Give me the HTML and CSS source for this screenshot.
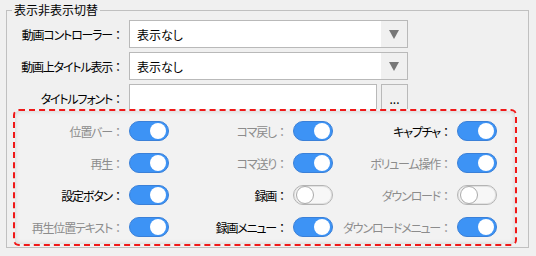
FILE: index.html
```html
<!DOCTYPE html>
<html lang="ja">
<head>
  <meta charset="UTF-8">
  <title>表示非表示切替</title>
  <link rel="stylesheet" href="styles.css">
</head>
<body>
  <fieldset class="group">
    <legend>表示非表示切替</legend>

    <div class="form">
      <label>動画コントローラー<span class="colon">：</span></label>
      <div class="select">
        <span class="select-text">表示なし</span>
        <span class="select-arrow">
          <svg width="10" height="10" viewBox="0 0 10 10"><path d="M0 1h10L5 10z" fill="#777"/></svg>
        </span>
      </div>

      <label>動画上タイトル表示<span class="colon">：</span></label>
      <div class="select">
        <span class="select-text">表示なし</span>
        <span class="select-arrow">
          <svg width="10" height="10" viewBox="0 0 10 10"><path d="M0 1h10L5 10z" fill="#777"/></svg>
        </span>
      </div>

      <label>タイトルフォント<span class="colon">：</span></label>
      <div class="font-row">
        <div class="textbox"></div>
        <div class="btn">...</div>
      </div>
    </div>

    <div class="panel">
      <div class="item"><span class="lbl off">位置バー<span class="colon">：</span></span><span class="toggle on"></span></div>
      <div class="item"><span class="lbl off">コマ戻し<span class="colon">：</span></span><span class="toggle on"></span></div>
      <div class="item"><span class="lbl">キャプチャ<span class="colon">：</span></span><span class="toggle on"></span></div>

      <div class="item"><span class="lbl off">再生<span class="colon">：</span></span><span class="toggle on"></span></div>
      <div class="item"><span class="lbl off">コマ送り<span class="colon">：</span></span><span class="toggle on"></span></div>
      <div class="item"><span class="lbl off">ボリューム操作<span class="colon">：</span></span><span class="toggle on"></span></div>

      <div class="item"><span class="lbl">設定ボタン<span class="colon">：</span></span><span class="toggle on"></span></div>
      <div class="item"><span class="lbl">録画<span class="colon">：</span></span><span class="toggle"></span></div>
      <div class="item"><span class="lbl off">ダウンロード<span class="colon">：</span></span><span class="toggle"></span></div>

      <div class="item"><span class="lbl off">再生位置テキスト<span class="colon">：</span></span><span class="toggle on"></span></div>
      <div class="item"><span class="lbl">録画メニュー<span class="colon">：</span></span><span class="toggle on"></span></div>
      <div class="item"><span class="lbl off">ダウンロードメニュー<span class="colon">：</span></span><span class="toggle on"></span></div>
    </div>
  </fieldset>
</body>
</html>
```

FILE: styles.css
```css
* {
  box-sizing: border-box;
}

body {
  margin: 0;
  background: #f0f0f0;
  font-family: "Noto Sans CJK JP", "Noto Sans", sans-serif;
  font-size: 12px;
  font-feature-settings: "palt";
  color: #000;
}

/* full-width colon keeps its spacing */
.colon {
  font-feature-settings: normal;
  letter-spacing: 0;
}

.group {
  margin: 2px 0 0 6px;
  width: 523px;
  padding: 0 0 1px 0;
  border: 1px solid #c0c0c0;
}

.group legend {
  margin-left: 5px;
  padding: 0 2px;
  line-height: 16px;
}

.form {
  display: grid;
  grid-template-columns: 117px 279px;
  grid-auto-rows: 28px;
  column-gap: 5px;
  row-gap: 4px;
  margin-top: 2px;
}

.form label {
  display: flex;
  align-items: center;
  justify-content: flex-end;
  white-space: nowrap;
  letter-spacing: -1.2px;
}

.select {
  display: flex;
  background: #fff;
  border: 1px solid #b9b9b9;
}

.select-text {
  flex: 1;
  display: flex;
  align-items: center;
  padding-left: 7px;
}

.select-arrow {
  width: 26px;
  background: #f0f0f0;
  display: flex;
  align-items: center;
  justify-content: center;
}

.font-row {
  display: flex;
  gap: 4px;
}

.textbox {
  flex: 1;
  background: #fff;
  border: 1px solid #b9b9b9;
}

.btn {
  width: 27px;
  border: 1px solid #b9b9b9;
  background: #f0f0f0;
  display: flex;
  align-items: flex-end;
  justify-content: center;
  padding-bottom: 6px;
  line-height: 1;
}

.panel {
  position: relative;
  margin: -3px 0 0 6px;
  width: 504px;
  padding: 10px 18px 7px 0;
  border: 2px dashed #f01818;
  border-radius: 6px;
  background: #f2f2f2;
  box-shadow: inset 0 0 5px rgba(0, 0, 0, 0.14);
  display: grid;
  grid-template-columns: repeat(3, 154px);
  grid-auto-rows: 20px;
  column-gap: 10px;
  row-gap: 12px;
}

.item {
  display: flex;
  align-items: center;
  justify-content: flex-end;
  gap: 5px;
}

.lbl {
  white-space: nowrap;
  letter-spacing: -1.2px;
}

.lbl.off {
  color: #8c8c8c;
}

.toggle {
  width: 40px;
  height: 20px;
  border-radius: 10px;
  border: 1px solid #b4b4b4;
  box-shadow: inset 0 0 0 1px #e2e2e2;
  background: #f7f7f7;
  display: flex;
  align-items: center;
  padding: 0 2px;
}

.toggle::after {
  content: "";
  width: 16px;
  height: 16px;
  border-radius: 50%;
  background: #fff;
  border: 1px solid #aaa;
}

.toggle.on {
  background: #3d93f5;
  border-color: #3a80d8;
  box-shadow: none;
  justify-content: flex-end;
}

.toggle.on::after {
  border: none;
}
```
